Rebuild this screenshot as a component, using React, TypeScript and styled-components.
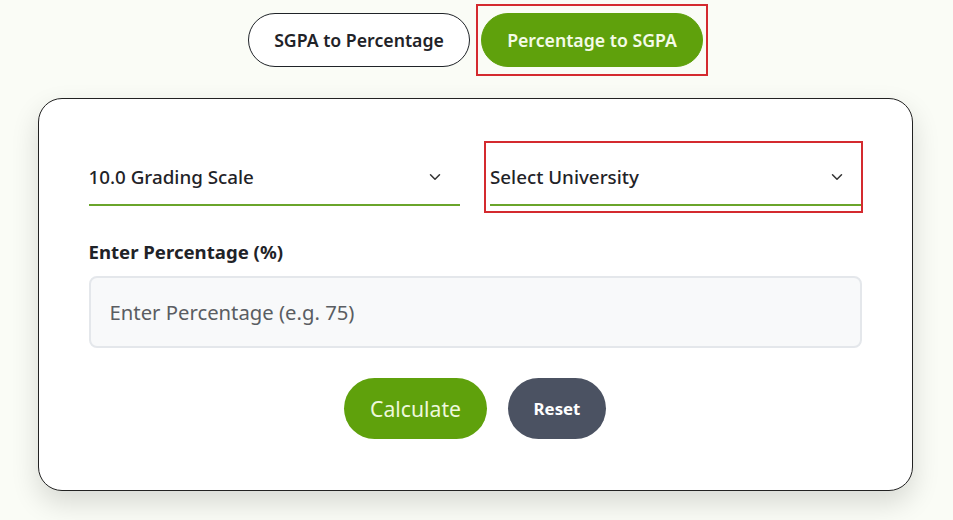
import React, { useState } from 'react';
import styled, { createGlobalStyle } from 'styled-components';
import { ChevronDown } from 'lucide-react';

const GlobalStyle = createGlobalStyle`
  html, body {
    margin: 0;
    padding: 0;
    background: #fafcf6;
    font-family: "Noto Sans", "Open Sans", sans-serif;
    color: #1f2328;
  }
`;

const Page = styled.div`
  width: 953px;
  height: 520px;
  overflow: hidden;
  display: flex;
  flex-direction: column;
  align-items: center;
  padding: 13px 3px 0 0;
  box-sizing: border-box;
`;

const Toggle = styled.div`
  display: flex;
  gap: 11px;
  margin-bottom: 31px;
  margin-left: 1px;
`;

const ToggleButton = styled.button<{ active?: boolean }>`
  position: relative;
  width: 222px;
  height: 54px;
  border-radius: 27px;
  border: 1px solid ${p => (p.active ? '#5fa10c' : '#1f2328')};
  background: ${p => (p.active ? '#5fa10c' : '#ffffff')};
  color: ${p => (p.active ? '#f4fbe8' : '#1f2328')};
  font-family: inherit;
  font-size: 17.7px;
  font-weight: 600;
  cursor: pointer;
`;

// red annotation boxes drawn over the highlighted controls
const Highlight = styled.span<{ dx: number; dy: number; right?: number }>`
  position: absolute;
  left: -${p => p.dx}px;
  right: -${p => p.right ?? p.dx}px;
  top: -${p => p.dy}px;
  bottom: -${p => p.dy}px;
  border: 2px solid #d42a2f;
  pointer-events: none;
`;

const Card = styled.div`
  width: 875px;
  box-sizing: border-box;
  background: #ffffff;
  border: 1px solid #222;
  border-radius: 24px;
  padding: 51px 50px 51px 50px;
  box-shadow: 0 12px 28px rgba(0, 0, 0, 0.14);
`;

const SelectRow = styled.div`
  display: grid;
  grid-template-columns: 1fr 1fr;
  gap: 30px;
  margin-bottom: 33px;
`;

const Select = styled.div`
  position: relative;
  height: 56px;
  box-sizing: border-box;
  display: flex;
  align-items: center;
  justify-content: space-between;
  padding: 0 16px 0 0;
  border-bottom: 2px solid #6aa52b;
  font-size: 18.8px;
  font-weight: 500;
  color: #1f2328;
  cursor: pointer;

  svg {
    color: #333;
  }
`;

const Label = styled.div`
  font-size: 18.6px;
  font-weight: 700;
  color: #1f2328;
  margin-bottom: 11px;
  line-height: 26px;
`;

const Input = styled.input`
  display: block;
  width: 100%;
  height: 72px;
  box-sizing: border-box;
  background: #f8f9fa;
  border: 2px solid #e4e7eb;
  border-radius: 8px;
  padding: 0 19px;
  font-family: inherit;
  font-size: 20.3px;
  color: #222;
  outline: none;

  &::placeholder {
    color: #5a5d62;
  }
`;

const Actions = styled.div`
  display: flex;
  justify-content: center;
  gap: 21px;
  margin-top: 30px;
`;

const ActionButton = styled.button<{ variant: 'primary' | 'muted' }>`
  height: 61px;
  border: none;
  border-radius: 31px;
  font-family: inherit;
  cursor: pointer;
  background: ${p => (p.variant === 'primary' ? '#5fa10c' : '#4b5262')};
  color: ${p => (p.variant === 'primary' ? '#eef8dc' : '#ffffff')};
  font-size: ${p => (p.variant === 'primary' ? '21.2px' : '16.8px')};
  font-weight: ${p => (p.variant === 'primary' ? 400 : 700)};
  width: ${p => (p.variant === 'primary' ? '143px' : '98px')};
`;

export default function App() {
  const [mode, setMode] = useState<'sgpa' | 'pct'>('pct');
  const [value, setValue] = useState('');

  return (
    <Page>
      <GlobalStyle />
      <Toggle>
        <ToggleButton active={mode === 'sgpa'} onClick={() => setMode('sgpa')}>
          SGPA to Percentage
        </ToggleButton>
        <ToggleButton active={mode === 'pct'} onClick={() => setMode('pct')}>
          Percentage to SGPA
          <Highlight dx={6} dy={10} />
        </ToggleButton>
      </Toggle>

      <Card>
        <SelectRow>
          <Select>
            10.0 Grading Scale
            <ChevronDown size={18} strokeWidth={2} />
          </Select>
          <Select>
            Select University
            <ChevronDown size={18} strokeWidth={2} />
            <Highlight dx={6} dy={9} right={1} />
          </Select>
        </SelectRow>

        <Label>Enter Percentage (%)</Label>
        <Input
          placeholder="Enter Percentage (e.g. 75)"
          value={value}
          onChange={e => setValue(e.target.value)}
        />

        <Actions>
          <ActionButton variant="primary">Calculate</ActionButton>
          <ActionButton variant="muted" onClick={() => setValue('')}>
            Reset
          </ActionButton>
        </Actions>
      </Card>
    </Page>
  );
}
